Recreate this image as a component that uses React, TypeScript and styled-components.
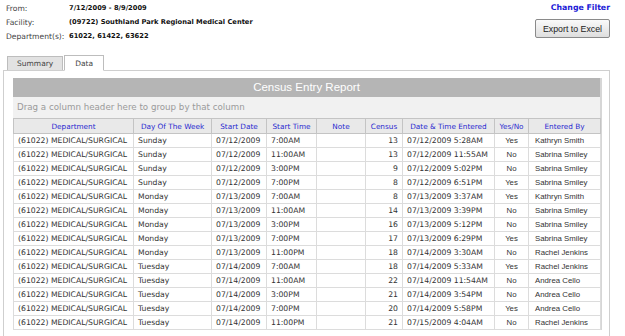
import styled, { createGlobalStyle } from "styled-components";

const GlobalStyle = createGlobalStyle`
  html, body {
    margin: 0;
    padding: 0;
    background: #ffffff;
    overflow: hidden;
  }
  body {
    font-family: "DejaVu Sans", Verdana, sans-serif;
    color: #333333;
  }
`;

type Row = {
  day: string;
  date: string;
  time: string;
  census: number;
  entered: string;
  yes: boolean;
  by: string;
};

const rows: Row[] = [
  { day: "Sunday", date: "07/12/2009", time: "7:00AM", census: 13, entered: "07/12/2009 5:28AM", yes: true, by: "Kathryn Smith" },
  { day: "Sunday", date: "07/12/2009", time: "11:00AM", census: 13, entered: "07/12/2009 11:55AM", yes: false, by: "Sabrina Smiley" },
  { day: "Sunday", date: "07/12/2009", time: "3:00PM", census: 9, entered: "07/12/2009 5:02PM", yes: false, by: "Sabrina Smiley" },
  { day: "Sunday", date: "07/12/2009", time: "7:00PM", census: 8, entered: "07/12/2009 6:51PM", yes: true, by: "Sabrina Smiley" },
  { day: "Monday", date: "07/13/2009", time: "7:00AM", census: 8, entered: "07/13/2009 3:37AM", yes: true, by: "Kathryn Smith" },
  { day: "Monday", date: "07/13/2009", time: "11:00AM", census: 14, entered: "07/13/2009 3:39PM", yes: false, by: "Sabrina Smiley" },
  { day: "Monday", date: "07/13/2009", time: "3:00PM", census: 16, entered: "07/13/2009 5:12PM", yes: false, by: "Sabrina Smiley" },
  { day: "Monday", date: "07/13/2009", time: "7:00PM", census: 17, entered: "07/13/2009 6:29PM", yes: true, by: "Sabrina Smiley" },
  { day: "Monday", date: "07/13/2009", time: "11:00PM", census: 18, entered: "07/14/2009 3:30AM", yes: false, by: "Rachel Jenkins" },
  { day: "Tuesday", date: "07/14/2009", time: "7:00AM", census: 18, entered: "07/14/2009 5:33AM", yes: true, by: "Rachel Jenkins" },
  { day: "Tuesday", date: "07/14/2009", time: "11:00AM", census: 22, entered: "07/14/2009 11:54AM", yes: false, by: "Andrea Cello" },
  { day: "Tuesday", date: "07/14/2009", time: "3:00PM", census: 21, entered: "07/14/2009 3:54PM", yes: false, by: "Andrea Cello" },
  { day: "Tuesday", date: "07/14/2009", time: "7:00PM", census: 20, entered: "07/14/2009 5:58PM", yes: true, by: "Andrea Cello" },
  { day: "Tuesday", date: "07/14/2009", time: "11:00PM", census: 21, entered: "07/15/2009 4:04AM", yes: false, by: "Rachel Jenkins" },
];

const columns = [
  { label: "Department", width: 120 },
  { label: "Day Of The Week", width: 78 },
  { label: "Start Date", width: 55 },
  { label: "Start Time", width: 50 },
  { label: "Note", width: 49 },
  { label: "Census", width: 37 },
  { label: "Date & Time Entered", width: 92 },
  { label: "Yes/No", width: 34 },
  { label: "Entered By", width: 72 },
];

export default function App() {
  return (
    <Page>
      <GlobalStyle />
      <TopBar>
        <FilterInfo>
          <FilterLabel>From:</FilterLabel>
          <FilterValue>7/12/2009 - 8/9/2009</FilterValue>
          <FilterLabel>Facility:</FilterLabel>
          <FilterValue>(09722) Southland Park Regional Medical Center</FilterValue>
          <FilterLabel>Department(s):</FilterLabel>
          <FilterValue>61022, 61422, 63622</FilterValue>
        </FilterInfo>
        <Actions>
          <ChangeFilter href="#">Change Filter</ChangeFilter>
          <ExportButton type="button">Export to Excel</ExportButton>
        </Actions>
      </TopBar>

      <TabStrip>
        <Tab>Summary</Tab>
        <Tab active>Data</Tab>
      </TabStrip>

      <TabPanel>
        <Grid>
          <GridTitle>Census Entry Report</GridTitle>
          <GroupPanel>Drag a column header here to group by that column</GroupPanel>
          <Table>
            <colgroup>
              {columns.map((c) => (
                <col key={c.label} style={{ width: c.width }} />
              ))}
            </colgroup>
            <thead>
              <tr>
                {columns.map((c) => (
                  <HeaderCell key={c.label}>{c.label}</HeaderCell>
                ))}
              </tr>
            </thead>
            <tbody>
              {rows.map((r, i) => (
                <tr key={i}>
                  <Cell>(61022) MEDICAL/SURGICAL</Cell>
                  <Cell>{r.day}</Cell>
                  <Cell>{r.date}</Cell>
                  <Cell>{r.time}</Cell>
                  <Cell></Cell>
                  <Cell align="right">{r.census}</Cell>
                  <Cell>{r.entered}</Cell>
                  <NarrowCell align="center">{r.yes ? "Yes" : "No"}</NarrowCell>
                  <NarrowCell>{r.by}</NarrowCell>
                </tr>
              ))}
            </tbody>
          </Table>
        </Grid>
      </TabPanel>
    </Page>
  );
}

const Page = styled.div`
  width: 625px;
  height: 336px;
  overflow: hidden;
`;

const TopBar = styled.div`
  display: flex;
  justify-content: space-between;
  align-items: flex-start;
  padding: 1px 15px 0 6px;
`;

const FilterInfo = styled.div`
  display: grid;
  grid-template-columns: 63px auto;
  grid-auto-rows: 14px;
  align-items: center;
`;

const FilterLabel = styled.div`
  font-size: 7.6px;
  color: #444444;
`;

const FilterValue = styled.div`
  font-size: 6.7px;
  font-weight: bold;
  color: #111111;
`;

const Actions = styled.div`
  display: flex;
  flex-direction: column;
  align-items: flex-end;
  gap: 7px;
  padding-top: 2px;
`;

const ChangeFilter = styled.a`
  font-size: 7.8px;
  font-weight: bold;
  color: #1a1ad6;
  text-decoration: none;
`;

const ExportButton = styled.button`
  width: 75px;
  height: 19px;
  padding: 0;
  font-family: "Liberation Sans", Arial, sans-serif;
  font-size: 8.8px;
  color: #222222;
  background: linear-gradient(#fafafa, #dedede);
  border: 1px solid #8a8a8a;
  border-radius: 2px;
`;

const TabStrip = styled.div`
  display: flex;
  align-items: flex-end;
  padding-left: 7px;
  margin-top: 11px;
  height: 16px;
`;

const Tab = styled.div<{ active?: boolean }>`
  height: ${(p) => (p.active ? 16 : 14)}px;
  box-sizing: border-box;
  padding: 0 ${(p) => (p.active ? 10 : 9)}px;
  display: flex;
  align-items: center;
  font-size: 7.5px;
  color: #444444;
  background: ${(p) => (p.active ? "#ffffff" : "#e2e2e2")};
  border: 1px solid #bdbdbd;
  border-bottom: ${(p) => (p.active ? "1px solid #ffffff" : "none")};
  margin-right: 1px;
  margin-bottom: ${(p) => (p.active ? -1 : 0)}px;
  position: relative;
`;

const TabPanel = styled.div`
  margin: 0 15px 0 3px;
  border: 1px solid #cfcfcf;
  border-bottom: none;
  padding: 7px 0 0 9px;
  height: 280px;
`;

const Grid = styled.div`
  width: 587px;
  border-right: 2px solid #d6d6d6;
`;

const GridTitle = styled.div`
  height: 19px;
  background: #b5b5b5;
  color: #ffffff;
  font-family: "Liberation Sans", Arial, sans-serif;
  font-size: 11.5px;
  line-height: 19px;
  text-align: center;
`;

const GroupPanel = styled.div`
  height: 21px;
  line-height: 21px;
  background: #f1f1f1;
  color: #9a9a9a;
  font-size: 8.7px;
  padding-left: 4px;
`;

const Table = styled.table`
  width: 587px;
  table-layout: fixed;
  border-collapse: collapse;
`;

const HeaderCell = styled.th`
  height: 14px;
  padding: 0 2px;
  background: #e9e9e9;
  border: 1px solid #c4c4c4;
  color: #2a2ad0;
  font-size: 7.3px;
  font-weight: normal;
  text-align: center;
  white-space: nowrap;
  overflow: hidden;
`;

const Cell = styled.td<{ align?: "left" | "right" | "center" }>`
  height: 13px;
  padding: 0 4px;
  border: 1px solid #dcdcdc;
  font-size: 7.7px;
  color: #333333;
  text-align: ${(p) => p.align ?? "left"};
  white-space: nowrap;
  overflow: hidden;
`;

const NarrowCell = styled(Cell)`
  font-family: "Liberation Sans", Arial, sans-serif;
  font-size: 7.8px;
  padding: 0 6px;
`;
